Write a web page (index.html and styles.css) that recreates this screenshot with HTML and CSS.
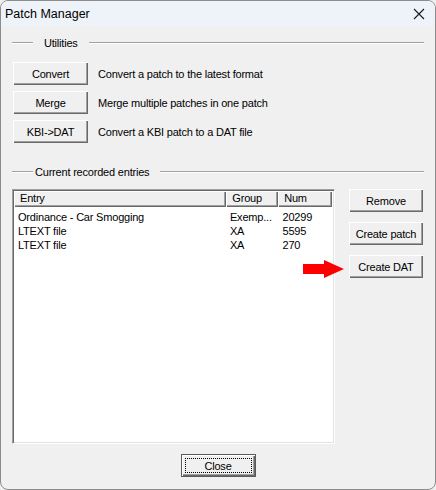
FILE: index.html
```html
<!DOCTYPE html>
<html>
<head>
<meta charset="utf-8">
<title>Patch Manager</title>
<link rel="stylesheet" href="styles.css">
</head>
<body>
<div class="window">
  <div class="titlebar">
    <span class="title">Patch Manager</span>
    <svg class="close-x" width="12" height="12" viewBox="0 0 12 12"><path d="M1 1 L11 11 M11 1 L1 11" stroke="#1a1a1a" stroke-width="1.1" fill="none"/></svg>
  </div>
  <div class="content">
    <div class="group-title gt-util"><span class="line lead"></span><span class="gt-text">Utilities</span><span class="line fill"></span></div>
    <div class="util-rows">
      <div class="util-row"><button class="btn util-btn">Convert</button><span class="desc">Convert a patch to the latest format</span></div>
      <div class="util-row"><button class="btn util-btn">Merge</button><span class="desc">Merge multiple patches in one patch</span></div>
      <div class="util-row"><button class="btn util-btn">KBI-&gt;DAT</button><span class="desc">Convert a KBI patch to a DAT file</span></div>
    </div>
    <div class="group-title gt-entries"><span class="line lead"></span><span class="gt-text">Current recorded entries</span><span class="line fill"></span></div>
    <div class="main">
      <div class="listbox">
        <div class="lv-header">
          <div class="hcell c-entry">Entry</div>
          <div class="hcell c-group">Group</div>
          <div class="hcell c-num">Num</div>
        </div>
        <div class="lv-rows">
          <div class="lv-row"><span class="c-entry">Ordinance - Car Smogging</span><span class="c-group">Exemp...</span><span class="c-num">20299</span></div>
          <div class="lv-row"><span class="c-entry">LTEXT file</span><span class="c-group">XA</span><span class="c-num">5595</span></div>
          <div class="lv-row"><span class="c-entry">LTEXT file</span><span class="c-group">XA</span><span class="c-num">270</span></div>
        </div>
      </div>
      <div class="side">
        <button class="btn side-btn">Remove</button>
        <button class="btn side-btn">Create patch</button>
        <button class="btn side-btn">Create DAT</button>
      </div>
    </div>
    <div class="footer">
      <button class="btn default-btn"><span class="focus">Close</span></button>
    </div>
  </div>
  <svg class="arrow" width="41" height="18" viewBox="0 0 41 18"><rect x="0" y="4" width="22" height="10" fill="#f00"/><polygon points="21,0 41,9 21,18" fill="#f00"/></svg>
</div>
</body>
</html>
```

FILE: styles.css
```css
html, body {
  margin: 0;
  padding: 0;
  background: #f0f0f0;
}
body {
  font-family: "Liberation Sans", Arial, sans-serif;
  font-size: 11px;
  letter-spacing: -0.2px;
  color: #000;
}
.window {
  position: relative;
  width: 436px;
  height: 490px;
  box-sizing: border-box;
  border: 1px solid #8c8c8c;
  border-radius: 8px;
  background: #f0f0f0;
  overflow: hidden;
  display: flex;
  flex-direction: column;
}
.titlebar {
  height: 25px;
  flex: none;
  background: #eef3f9;
  display: flex;
  align-items: center;
  justify-content: space-between;
  padding: 0 10px 0 4px;
}
.title {
  font-size: 12.5px;
  letter-spacing: 0;
  color: #000;
}
.close-x {
  display: block;
}
.content {
  flex: 1;
  display: flex;
  flex-direction: column;
  padding: 0 11px 0 11px;
}
.group-title {
  display: flex;
  align-items: center;
  height: 14px;
}
.gt-util { margin-top: 10px; }
.gt-entries { margin-top: 22px; }
.line {
  height: 0;
  border-top: 1px solid #a0a0a0;
  border-bottom: 1px solid #ffffff;
}
.lead { width: 21px; flex: none; }
.fill { flex: 1; }
.gt-util .gt-text { margin: 0 11px 0 11px; }
.gt-entries .gt-text { margin: 0 11px 0 2px; }
.util-rows {
  margin-top: 12px;
  display: flex;
  flex-direction: column;
  gap: 6px;
  padding-left: 1px;
}
.util-row {
  display: flex;
  align-items: center;
  gap: 10px;
}
.btn {
  font-family: inherit;
  font-size: 11px;
  letter-spacing: -0.2px;
  color: #000;
  background: #f0f0f0;
  border: none;
  box-sizing: border-box;
  margin: 0;
  padding: 0;
  box-shadow: inset 1px 1px #ffffff, inset -1px -1px #696969, inset -2px -2px #a0a0a0;
}
.util-btn {
  width: 75px;
  height: 23px;
  flex: none;
}
.main {
  margin-top: 10px;
  display: flex;
  align-items: flex-start;
}
.listbox {
  width: 323px;
  height: 255px;
  box-sizing: border-box;
  background: #fff;
  border-top: 1px solid #a0a0a0;
  border-left: 1px solid #a0a0a0;
  border-right: 1px solid #ffffff;
  border-bottom: 1px solid #ffffff;
  box-shadow: inset 1px 1px #696969, inset -1px -1px #e3e3e3;
  padding: 1px 2px 1px 1px;
}
.lv-header {
  display: flex;
  height: 16px;
  background: #f0f0f0;
}
.hcell {
  box-sizing: border-box;
  height: 16px;
  line-height: 15px;
  padding-left: 6px;
  box-shadow: inset 1px 1px #ffffff, inset -1px -1px #696969, inset -2px -2px #a0a0a0;
}
.lv-header .c-entry { width: 213px; }
.lv-header .c-group { width: 52px; }
.lv-header .c-num { width: 54px; }
.lv-rows {
  margin-top: 3px;
}
.lv-row {
  display: flex;
  height: 14px;
  line-height: 14px;
}
.lv-row span { box-sizing: border-box; white-space: nowrap; }
.lv-row .c-entry { width: 218px; padding-left: 4px; }
.lv-row .c-group { width: 53px; }
.lv-row .c-num { width: 50px; }
.side {
  margin-left: 14px;
  display: flex;
  flex-direction: column;
  gap: 10px;
}
.side-btn {
  width: 74px;
  height: 23px;
}
.footer {
  margin-top: 10px;
  display: flex;
  justify-content: center;
}
.default-btn {
  width: 75px;
  height: 23px;
  border: 1px solid #5a5a5a;
  padding: 3px;
  display: flex;
}
.focus {
  flex: 1;
  display: flex;
  align-items: center;
  justify-content: center;
  outline: 1px dotted #000;
  outline-offset: -1px;
}
.arrow {
  position: absolute;
  left: 302px;
  top: 259px;
}
```
